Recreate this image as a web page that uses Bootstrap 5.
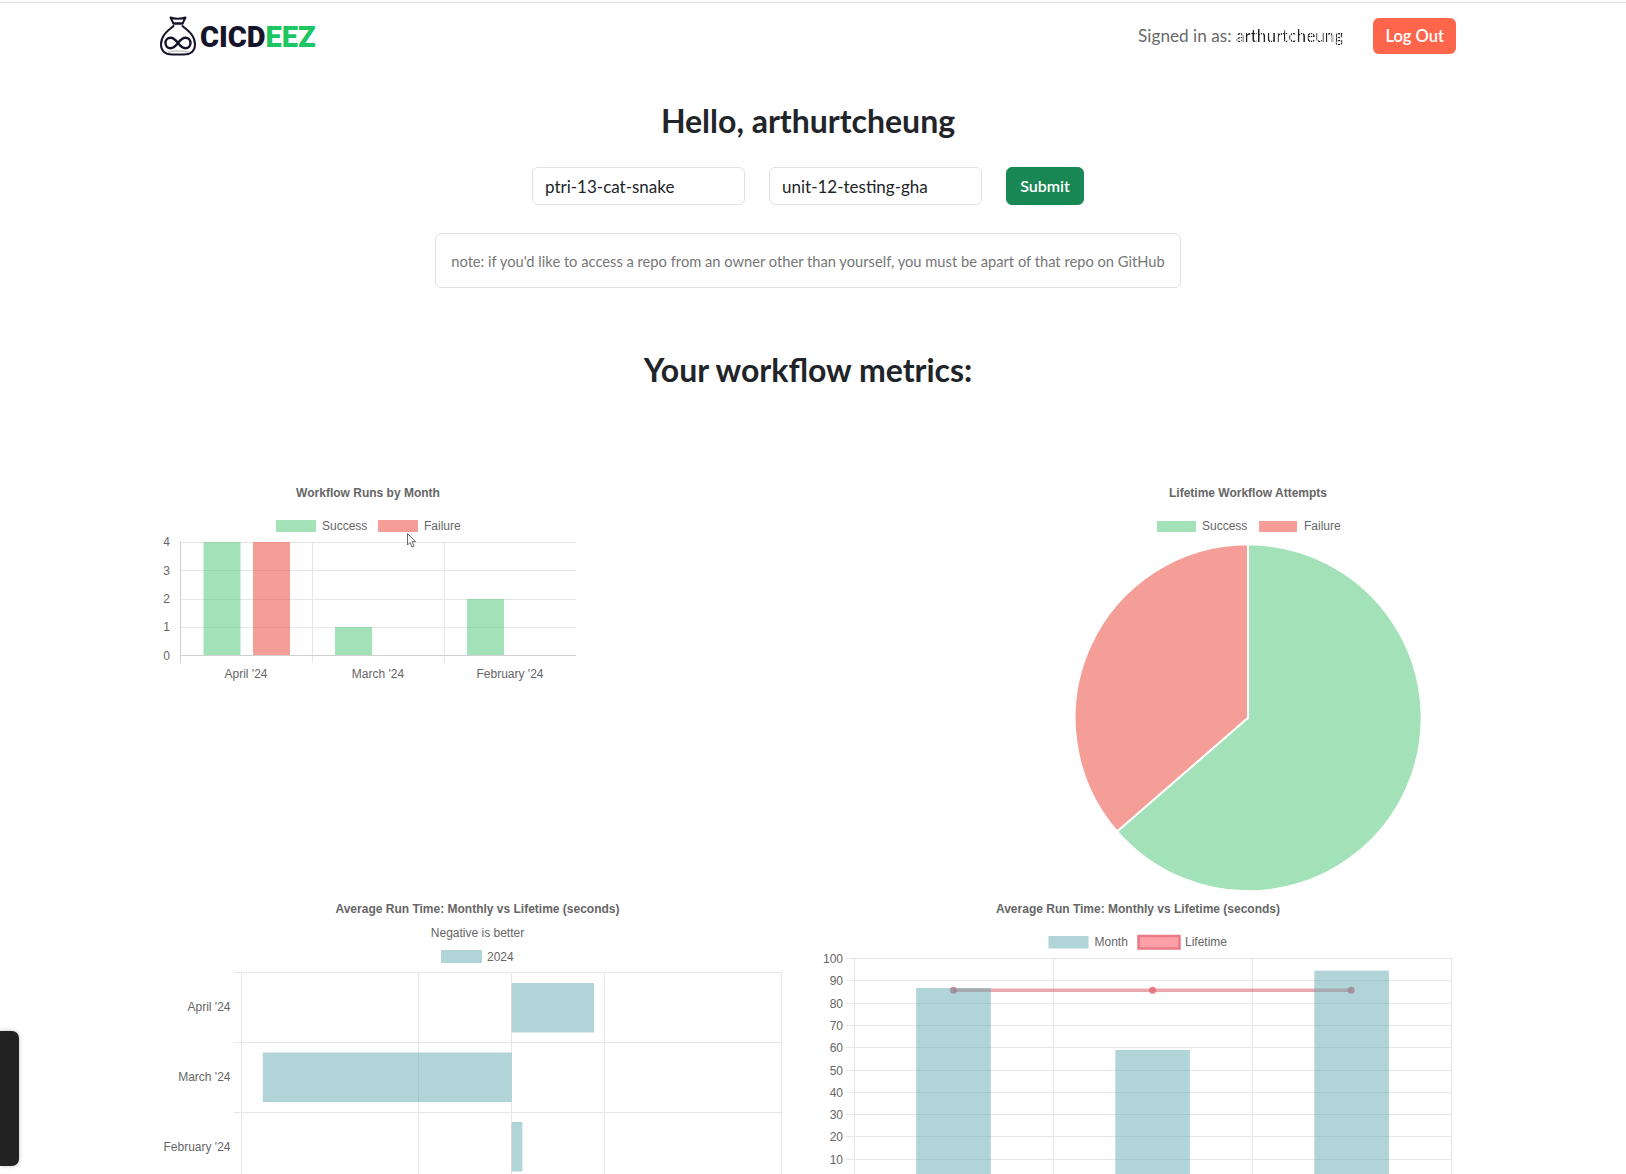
<!doctype html>
<html lang="en">
<head>
    <meta charset="utf-8">
    <meta name="viewport" content="width=device-width, initial-scale=1">
    <title>CICDeez</title>
    <link href="https://cdn.jsdelivr.net/npm/bootstrap@5.3.3/dist/css/bootstrap.min.css" rel="stylesheet">
    <style>
        html, body {
            height: 100vh;
            overflow: hidden;
        }
        body {
            padding-right: 10px;
            font-family: "Lato", "Open Sans", sans-serif;
            color: #212529;
        }
        .top-rule {
            height: 1px;
            margin-top: 2px;
            background-color: #e2e2e2;
            margin-right: -10px;
        }
        .site-header {
            height: 65px;
        }
        .brand-name {
            font-family: "Roboto", sans-serif;
            font-weight: 900;
            font-size: 29px;
            line-height: 1;
            color: #15142b;
            margin-top: 3px;
        }
        .brand-name span {
            color: #1cc763;
        }
        .signed-in {
            color: #6a6a6a;
            font-size: 17.2px;
            margin-top: 1px;
            margin-right: 30px;
        }
        .signed-name {
            color: transparent;
            background: repeating-linear-gradient(90deg, #222 0 1.5px, #ccc 1.5px 2.5px);
            -webkit-background-clip: text;
            background-clip: text;
        }
        .btn-logout {
            background-color: #ff654a;
            color: #fff;
            font-weight: 600;
            font-size: 16.5px;
            line-height: 24px;
            padding: 5px 11px;
        }
        .btn-logout:hover {
            background-color: #f0583e;
            color: #fff;
        }
        .page-title {
            font-size: 32px;
            font-weight: 700;
            text-align: center;
        }
        .hello-title {
            margin: 34px 0 27px;
        }
        .metrics-title {
            margin: 63px 0 90px;
        }
        .repo-form {
            gap: 24px;
        }
        .repo-form .form-control {
            width: 213px;
            height: 38px;
            border-color: #e2e2e2;
            font-size: 17px;
            line-height: 24px;
            padding-top: 0;
            padding-bottom: 0;
        }
        .repo-form .btn {
            width: 78px;
            height: 38px;
            padding: 0;
            font-weight: 600;
        }
        .repo-note {
            width: 746px;
            height: 55px;
            margin: 28px auto 0;
            border-color: #e5e5e5;
            color: #777;
            font-size: 14.7px;
        }
        .chart-row svg {
            display: block;
        }
        .chart-row text {
            font-family: "Liberation Sans", Arial, sans-serif;
            font-size: 12px;
            fill: #666;
        }
        .chart-row text.chart-title {
            font-weight: 700;
        }
        .grid-line {
            stroke: #e6e6e6;
            stroke-width: 1;
        }
        .axis-line {
            stroke: #cfcfcf;
            stroke-width: 1;
        }
        .fill-ok {
            fill: rgba(71, 197, 113, .5);
        }
        .fill-bad {
            fill: rgba(235, 59, 47, .5);
        }
        .fill-teal {
            fill: rgba(99, 169, 177, .5);
        }
        .side-tab {
            position: fixed;
            left: 0;
            top: 1031px;
            width: 19px;
            height: 135px;
            background-color: #222;
            border-radius: 0 7px 7px 0;
            box-shadow: 0 0 4px rgba(0, 0, 0, .25);
        }
    </style>
</head>
<body>
    <div class="top-rule"></div>
    <div class="container">
        <header class="site-header d-flex justify-content-between align-items-center">
            <div class="d-flex align-items-center gap-1">
                <svg width="36" height="40" viewBox="0 0 36 40" fill="none" stroke="#15142b" stroke-width="2" stroke-linejoin="round" stroke-linecap="round">
                    <path d="M10.5 1.5 C14 3 22 3 25.5 1.5 L22.5 7.5 H13.5 Z" fill="#fff"/>
                    <path d="M13.5 7.5 H22.5 M13.5 10 C10 13.5 1 18 1 28.5 C1 35.5 6 38.5 12 38.5 H24 C30 38.5 35 35.5 35 28.5 C35 18 26 13.5 22.5 10"/>
                    <path stroke-width="2.4" d="M18 27 C15 23 13 21.8 10.5 21.8 C7.5 21.8 5.5 24.2 5.5 27 C5.5 29.8 7.5 32.2 10.5 32.2 C13 32.2 15 31 18 27 C21 23 23 21.8 25.5 21.8 C28.5 21.8 30.5 24.2 30.5 27 C30.5 29.8 28.5 32.2 25.5 32.2 C23 32.2 21 31 18 27 Z"/>
                    <path d="M8 36.2 C13 34.5 22 35 29 36" stroke="#c9c9c9" stroke-width="1.5"/>
                </svg>
                <div class="brand-name">CICD<span>EEZ</span></div>
            </div>
            <div class="d-flex align-items-center">
                <div class="signed-in">Signed in as: <span class="signed-name">arthurtcheung</span></div>
                <button type="button" class="btn btn-logout">Log Out</button>
            </div>
        </header>

        <h2 class="page-title hello-title">Hello, arthurtcheung</h2>

        <form class="repo-form d-flex justify-content-center">
            <input type="text" class="form-control" value="ptri-13-cat-snake">
            <input type="text" class="form-control" value="unit-12-testing-gha">
            <button type="button" class="btn btn-success">Submit</button>
        </form>

        <div class="repo-note border rounded-2 d-flex align-items-center justify-content-center">note: if you'd like to access a repo from an owner other than yourself, you must be apart of that repo on GitHub</div>

        <h2 class="page-title metrics-title">Your workflow metrics:</h2>

        <!-- Top charts -->
        <div class="chart-row row g-0">
            <div class="col-6">
                <svg width="648" height="415" viewBox="160 480 648 415">
                    <text class="chart-title" x="368" y="497" text-anchor="middle">Workflow Runs by Month</text>
                    <rect class="fill-ok" x="276" y="520" width="40" height="12"/>
                    <text x="322" y="530">Success</text>
                    <rect class="fill-bad" x="378" y="520" width="40" height="12"/>
                    <text x="424" y="530">Failure</text>

                    <path class="grid-line" d="M180 542.5H576 M180 570.5H576 M180 599.5H576 M180 627.5H576 M312.5 542V663 M444.5 542V663"/>
                    <path class="axis-line" d="M180.5 542V663 M180 655.5H576"/>

                    <rect class="fill-ok" x="203.5" y="542" width="37" height="113"/>
                    <rect class="fill-bad" x="253" y="542" width="37" height="113"/>
                    <rect class="fill-ok" x="335" y="627" width="37" height="28"/>
                    <rect class="fill-ok" x="467" y="599" width="37" height="56"/>

                    <text x="170" y="546" text-anchor="end">4</text>
                    <text x="170" y="575" text-anchor="end">3</text>
                    <text x="170" y="603" text-anchor="end">2</text>
                    <text x="170" y="631" text-anchor="end">1</text>
                    <text x="170" y="660" text-anchor="end">0</text>
                    <text x="246" y="678" text-anchor="middle">April '24</text>
                    <text x="378" y="678" text-anchor="middle">March '24</text>
                    <text x="510" y="678" text-anchor="middle">February '24</text>

                    <path d="M407.5 533.5V545L410 542.5L412 547L414 546L412 541.7H415.5Z" fill="#fff" stroke="#444" stroke-width=".8"/>
                </svg>
            </div>
            <div class="col-6">
                <svg width="648" height="415" viewBox="808 480 648 415">
                    <text class="chart-title" x="1248" y="497" text-anchor="middle">Lifetime Workflow Attempts</text>
                    <rect class="fill-ok" x="1157" y="521" width="39" height="11"/>
                    <text x="1202" y="530">Success</text>
                    <rect class="fill-bad" x="1259" y="521" width="38" height="11"/>
                    <text x="1304" y="530">Failure</text>

                    <path d="M1248 717.8V544.3A173.5 173.5 0 1 1 1117 831.4Z" fill="#a3e2b8" stroke="#fff" stroke-width="2" stroke-linejoin="round"/>
                    <path d="M1248 717.8L1117 831.4A173.5 173.5 0 0 1 1248 544.3Z" fill="#f59d97" stroke="#fff" stroke-width="2" stroke-linejoin="round"/>
                </svg>
            </div>
        </div>

        <!-- Bottom charts, cut off by the window -->
        <div class="chart-row row g-0">
            <div class="col-6">
                <svg width="648" height="280" viewBox="160 895 648 280">
                    <text class="chart-title" x="477.5" y="913" text-anchor="middle">Average Run Time: Monthly vs Lifetime (seconds)</text>
                    <text x="477.5" y="937" text-anchor="middle">Negative is better</text>
                    <rect class="fill-teal" x="441" y="950" width="41" height="13"/>
                    <text x="487" y="961">2024</text>

                    <path class="grid-line" d="M234 972.5H782 M234 1042.5H782 M234 1112.5H782 M241.5 972V1175 M418.5 972V1175 M511.5 972V1175 M604.5 972V1175 M781.5 972V1175"/>

                    <rect class="fill-teal" x="511.7" y="983" width="82.3" height="49.5"/>
                    <rect class="fill-teal" x="262.8" y="1052.5" width="248.9" height="49.5"/>
                    <rect class="fill-teal" x="511.7" y="1122" width="10.7" height="49.5"/>

                    <text x="230.5" y="1011" text-anchor="end">April '24</text>
                    <text x="230.5" y="1081" text-anchor="end">March '24</text>
                    <text x="230.5" y="1151" text-anchor="end">February '24</text>
                </svg>
            </div>
            <div class="col-6">
                <svg width="648" height="280" viewBox="808 895 648 280">
                    <text class="chart-title" x="1138" y="913" text-anchor="middle">Average Run Time: Monthly vs Lifetime (seconds)</text>
                    <rect class="fill-teal" x="1048.5" y="936" width="40" height="12.5"/>
                    <text x="1094.5" y="946">Month</text>
                    <rect x="1138.5" y="936" width="41" height="12.5" fill="#ffa0a8" stroke="#ea7a84" stroke-width="2.5"/>
                    <text x="1185" y="946">Lifetime</text>

                    <path class="grid-line" d="M846 958.5H1451 M846 980.5H1451 M846 1003.5H1451 M846 1025.5H1451 M846 1047.5H1451 M846 1070.5H1451 M846 1092.5H1451 M846 1114.5H1451 M846 1136.5H1451 M846 1159.5H1451 M854.5 958V1175 M1053.5 958V1175 M1252.5 958V1175 M1451.5 958V1175"/>

                    <!-- the line sits under the bars, so it greys where they cross -->
                    <path d="M953.5 990.3H1351.2" stroke="#d9606c" stroke-opacity=".55" stroke-width="3.5"/>
                    <circle cx="953.5" cy="990.3" r="3.5" fill="#d9606c" fill-opacity=".8"/>
                    <circle cx="1152.6" cy="990.3" r="3.5" fill="#e8707c" fill-opacity=".9"/>
                    <circle cx="1351.2" cy="990.3" r="3.5" fill="#d9606c" fill-opacity=".8"/>

                    <rect class="fill-teal" x="916.2" y="988" width="74.6" height="187"/>
                    <rect class="fill-teal" x="1115.3" y="1050" width="74.6" height="125"/>
                    <rect class="fill-teal" x="1314.3" y="970.7" width="74.6" height="204.3"/>

                    <text x="843" y="962.5" text-anchor="end">100</text>
                    <text x="843" y="985" text-anchor="end">90</text>
                    <text x="843" y="1007.5" text-anchor="end">80</text>
                    <text x="843" y="1029.5" text-anchor="end">70</text>
                    <text x="843" y="1051.5" text-anchor="end">60</text>
                    <text x="843" y="1074.5" text-anchor="end">50</text>
                    <text x="843" y="1096.5" text-anchor="end">40</text>
                    <text x="843" y="1118.5" text-anchor="end">30</text>
                    <text x="843" y="1141" text-anchor="end">20</text>
                    <text x="843" y="1163.5" text-anchor="end">10</text>
                </svg>
            </div>
        </div>
    </div>

    <div class="side-tab"></div>

    <script src="https://cdn.jsdelivr.net/npm/bootstrap@5.3.3/dist/js/bootstrap.bundle.min.js"></script>
</body>
</html>
